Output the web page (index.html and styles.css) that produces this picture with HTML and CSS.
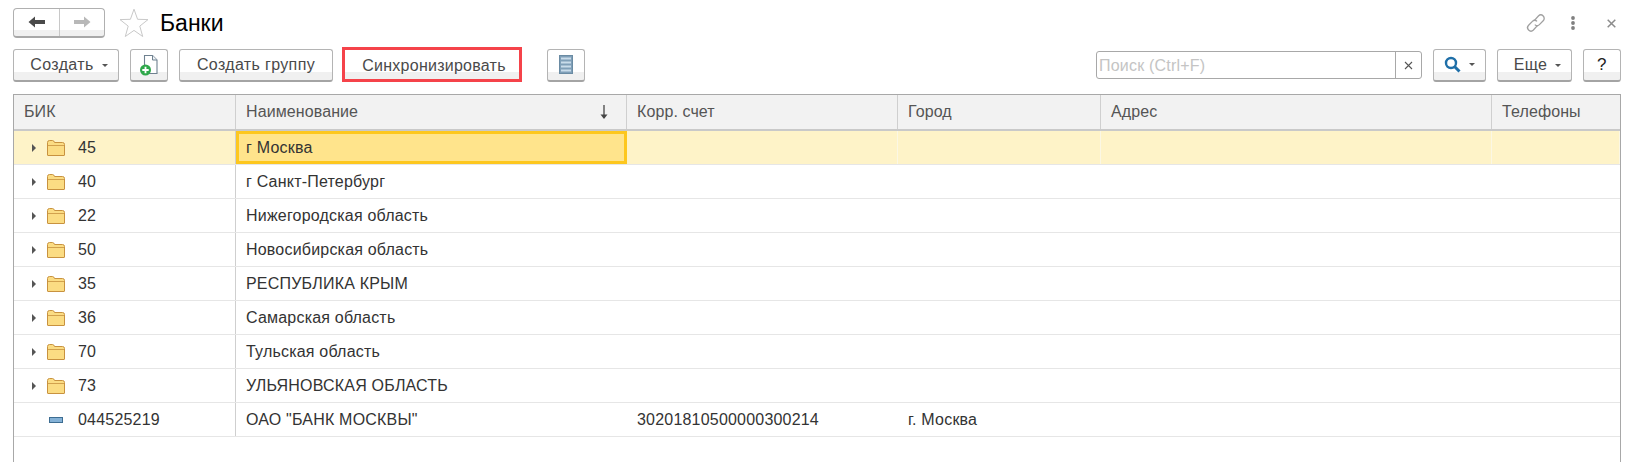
FILE: index.html
```html
<!DOCTYPE html>
<html lang="ru">
<head>
<meta charset="utf-8">
<title>Банки</title>
<link rel="stylesheet" href="styles.css">
</head>
<body>
<div class="page">
  <header class="top">
    <div class="nav">
      <div class="nav-part nav-back"><svg width="18" height="14" viewBox="0 0 18 14"><path d="M0.5 7 7 1.5V5h10v4H7v3.5z" fill="#4a4a4a"/></svg></div>
      <div class="nav-part"><svg width="18" height="14" viewBox="0 0 18 14"><path d="M17.5 7 11 1.5V5H1v4h10v3.5z" fill="#b8b8b8"/></svg></div>
    </div>
    <svg class="star" width="30" height="30" viewBox="0 0 30 30"><path d="M15 1.2 18.6 11.3 29 11.6 20.8 18.1 23.7 28.5 15 22.4 6.3 28.5 9.2 18.1 1 11.6 11.4 11.3z" fill="#fff" stroke="#c9c9c9" stroke-width="1"/></svg>
    <h1 class="title">Банки</h1>
    <div class="win">
      <svg class="w-link" width="20" height="20" viewBox="0 0 20 20" fill="none" stroke="#a0a0a0" stroke-width="1.300"><path d="M8.200 7.600 12.400 3a3.300 3.300 0 0 1 4.800 4.800l-3.800 3.800a3.300 3.300 0 0 1-4.600 0"/><path d="M11.600 12.400 7.400 17a3.300 3.300 0 0 1-4.800-4.800l3.800-3.800a3.300 3.300 0 0 1 4.600 0"/></svg>
      <svg class="w-dots" width="6" height="14" viewBox="0 0 6 14" fill="#808080"><circle cx="3" cy="2" r="1.900"/><circle cx="3" cy="7" r="1.900"/><circle cx="3" cy="12" r="1.900"/></svg>
      <svg class="w-close" width="9" height="9" viewBox="0 0 9 9" stroke="#8c8c8c" stroke-width="1.500"><path d="M.7.7l7.6 7.6M8.300.7.7 8.300"/></svg>
    </div>
  </header>

  <div class="toolbar">
    <div class="btn b-create">Создать<span class="caret"></span></div>
    <div class="btn b-add">
      <svg width="20" height="22" viewBox="0 0 20 22"><path d="M5.500 1.500h8l4.500 4.500v13.500H5.500z" fill="#fff" stroke="#6f8190" stroke-width="1.100"/><path d="M13.500 1.500V6H18" fill="#eef2f5" stroke="#6f8190" stroke-width="1"/><circle cx="6.500" cy="16" r="5.500" fill="#2ea84a"/><path d="M6.500 12.800v6.400M3.300 16h6.400" stroke="#fff" stroke-width="1.800"/></svg>
    </div>
    <div class="btn b-group">Создать группу</div>
    <div class="btn b-sync">Синхронизировать</div>
    <div class="btn b-list">
      <svg width="14" height="19" viewBox="0 0 14 19"><rect x=".5" y=".5" width="13" height="18" fill="#7f9fb8" stroke="#6a8ba3"/><path d="M2 3.500h10M2 7.500h10M2 11.500h10M2 15.500h10" stroke="#c9dcea" stroke-width="2"/></svg>
    </div>
    <div class="search">
      <span class="search-text">Поиск (Ctrl+F)</span>
      <span class="search-clear"><svg width="9" height="9" viewBox="0 0 9 9" stroke="#555" stroke-width="1.100"><path d="M1 1l7 7M8 1 1 8"/></svg></span>
    </div>
    <div class="btn b-find">
      <svg width="17" height="17" viewBox="0 0 17 17" fill="none" stroke="#1f6fa8"><circle cx="7" cy="7" r="5" stroke-width="2.400"/><path d="M10.500 10.500 15.500 15.500" stroke-width="3"/></svg><span class="caret"></span>
    </div>
    <div class="btn b-more">Еще<span class="caret"></span></div>
    <div class="btn b-help">?</div>
  </div>

  <div class="table">
    <div class="row head">
      <div class="cell">БИК</div>
      <div class="cell sort">Наименование<svg width="10" height="15" viewBox="0 0 10 15"><path d="M5 0v13" stroke="#444" stroke-width="1.300"/><path d="M1.500 9.500h7L5 14z" fill="#444"/></svg></div>
      <div class="cell">Корр. счет</div>
      <div class="cell">Город</div>
      <div class="cell">Адрес</div>
      <div class="cell">Телефоны</div>
    </div>

    <div class="row current">
      <div class="cell code"><i class="tw"></i><svg class="folder" width="18" height="16" viewBox="0 0 18 16"><path d="M.5 15V2.500Q.5 .5 2.500 .5h3Q7 .5 7.500 2.500H15.500Q17.500 2.500 17.500 4.500V15Q17.500 15.500 17 15.500H1Q.5 15.500 .5 15z" fill="#fbdc83" stroke="#c8923f"/><path d="M1 5.500h16" stroke="#c8923f" stroke-width=".8"/></svg><span>45</span></div>
      <div class="cell focus">г Москва</div>
      <div class="cell"></div><div class="cell"></div><div class="cell"></div><div class="cell"></div>
    </div>
    <div class="row">
      <div class="cell code"><i class="tw"></i><svg class="folder" width="18" height="16" viewBox="0 0 18 16"><path d="M.5 15V2.500Q.5 .5 2.500 .5h3Q7 .5 7.500 2.500H15.500Q17.500 2.500 17.500 4.500V15Q17.500 15.500 17 15.500H1Q.5 15.500 .5 15z" fill="#fbdc83" stroke="#c8923f"/><path d="M1 5.500h16" stroke="#c8923f" stroke-width=".8"/></svg><span>40</span></div>
      <div class="cell">г Санкт-Петербург</div>
      <div class="cell"></div><div class="cell"></div><div class="cell"></div><div class="cell"></div>
    </div>
    <div class="row">
      <div class="cell code"><i class="tw"></i><svg class="folder" width="18" height="16" viewBox="0 0 18 16"><path d="M.5 15V2.500Q.5 .5 2.500 .5h3Q7 .5 7.500 2.500H15.500Q17.500 2.500 17.500 4.500V15Q17.500 15.500 17 15.500H1Q.5 15.500 .5 15z" fill="#fbdc83" stroke="#c8923f"/><path d="M1 5.500h16" stroke="#c8923f" stroke-width=".8"/></svg><span>22</span></div>
      <div class="cell">Нижегородская область</div>
      <div class="cell"></div><div class="cell"></div><div class="cell"></div><div class="cell"></div>
    </div>
    <div class="row">
      <div class="cell code"><i class="tw"></i><svg class="folder" width="18" height="16" viewBox="0 0 18 16"><path d="M.5 15V2.500Q.5 .5 2.500 .5h3Q7 .5 7.500 2.500H15.500Q17.500 2.500 17.500 4.500V15Q17.500 15.500 17 15.500H1Q.5 15.500 .5 15z" fill="#fbdc83" stroke="#c8923f"/><path d="M1 5.500h16" stroke="#c8923f" stroke-width=".8"/></svg><span>50</span></div>
      <div class="cell">Новосибирская область</div>
      <div class="cell"></div><div class="cell"></div><div class="cell"></div><div class="cell"></div>
    </div>
    <div class="row">
      <div class="cell code"><i class="tw"></i><svg class="folder" width="18" height="16" viewBox="0 0 18 16"><path d="M.5 15V2.500Q.5 .5 2.500 .5h3Q7 .5 7.500 2.500H15.500Q17.500 2.500 17.500 4.500V15Q17.500 15.500 17 15.500H1Q.5 15.500 .5 15z" fill="#fbdc83" stroke="#c8923f"/><path d="M1 5.500h16" stroke="#c8923f" stroke-width=".8"/></svg><span>35</span></div>
      <div class="cell">РЕСПУБЛИКА КРЫМ</div>
      <div class="cell"></div><div class="cell"></div><div class="cell"></div><div class="cell"></div>
    </div>
    <div class="row">
      <div class="cell code"><i class="tw"></i><svg class="folder" width="18" height="16" viewBox="0 0 18 16"><path d="M.5 15V2.500Q.5 .5 2.500 .5h3Q7 .5 7.500 2.500H15.500Q17.500 2.500 17.500 4.500V15Q17.500 15.500 17 15.500H1Q.5 15.500 .5 15z" fill="#fbdc83" stroke="#c8923f"/><path d="M1 5.500h16" stroke="#c8923f" stroke-width=".8"/></svg><span>36</span></div>
      <div class="cell">Самарская область</div>
      <div class="cell"></div><div class="cell"></div><div class="cell"></div><div class="cell"></div>
    </div>
    <div class="row">
      <div class="cell code"><i class="tw"></i><svg class="folder" width="18" height="16" viewBox="0 0 18 16"><path d="M.5 15V2.500Q.5 .5 2.500 .5h3Q7 .5 7.500 2.500H15.500Q17.500 2.500 17.500 4.500V15Q17.500 15.500 17 15.500H1Q.5 15.500 .5 15z" fill="#fbdc83" stroke="#c8923f"/><path d="M1 5.500h16" stroke="#c8923f" stroke-width=".8"/></svg><span>70</span></div>
      <div class="cell">Тульская область</div>
      <div class="cell"></div><div class="cell"></div><div class="cell"></div><div class="cell"></div>
    </div>
    <div class="row">
      <div class="cell code"><i class="tw"></i><svg class="folder" width="18" height="16" viewBox="0 0 18 16"><path d="M.5 15V2.500Q.5 .5 2.500 .5h3Q7 .5 7.500 2.500H15.500Q17.500 2.500 17.500 4.500V15Q17.500 15.500 17 15.500H1Q.5 15.500 .5 15z" fill="#fbdc83" stroke="#c8923f"/><path d="M1 5.500h16" stroke="#c8923f" stroke-width=".8"/></svg><span>73</span></div>
      <div class="cell">УЛЬЯНОВСКАЯ ОБЛАСТЬ</div>
      <div class="cell"></div><div class="cell"></div><div class="cell"></div><div class="cell"></div>
    </div>
    <div class="row">
      <div class="cell code leaf"><i class="dash"></i><span>044525219</span></div>
      <div class="cell">ОАО "БАНК МОСКВЫ"</div>
      <div class="cell">30201810500000300214</div>
      <div class="cell">г. Москва</div>
      <div class="cell"></div><div class="cell"></div>
    </div>
  </div>
</div>
</body>
</html>
```
FILE: styles.css
```css
* { box-sizing: border-box; }
html, body { margin: 0; height: 100%; background: #fff; overflow: hidden; }
body { font-family: "Liberation Sans", Arial, sans-serif; font-size: 16px; letter-spacing: .2px; color: #333; }
.page { height: 462px; display: flex; flex-direction: column; padding: 8px 20px 0 13px; }

.top { display: flex; align-items: center; height: 30px; flex: none; }
.nav {
  width: 92px; height: 30px; display: flex; border: 1px solid #b0b0b0; border-bottom: 2px solid #a8a8a8; border-radius: 4px;
  background: linear-gradient(#fff 0 21px, #f0f0f0 21px);
}
.nav-part { flex: 1; display: flex; align-items: center; justify-content: center; padding-bottom: 2px; }
.nav-back { border-right: 1px solid #c8c8c8; flex: 0 0 46px; }
.star { margin-left: 14px; flex: none; }
.title { margin: 0 0 0 11px; font-size: 23px; font-weight: 400; letter-spacing: 0; color: #000; line-height: 30px; }
.win { margin-left: auto; display: flex; align-items: center; }
.w-link { margin-right: 24px; }
.w-dots { margin-right: 31px; }
.w-close { margin-right: 5px; }

.toolbar { display: flex; align-items: flex-end; height: 35px; margin-top: 9px; flex: none; }
.btn {
  height: 33px; flex: none; display: flex; align-items: center; justify-content: center;
  border: 1px solid #b4b4b4; border-bottom: 2px solid #a4a4a4; border-radius: 3px;
  background: linear-gradient(#fff 0 22px, #f0f0f0 22px);
  color: #4a4a4a; font-size: 16px; letter-spacing: .35px;
}
.caret { width: 0; height: 0; margin-left: 8px; margin-top: 1px; border: 3px solid transparent; border-top: 3px solid #555; border-bottom: 0; }
.b-create { width: 106px; padding-left: 6px; }
.b-add { width: 38px; margin-left: 11px; }
.b-group { width: 154px; margin-left: 11px; }
.b-sync { width: 180px; height: 35px; margin-left: 9px; padding: 2px 0 0 4px; border: 3px solid #f5434a; border-radius: 0; letter-spacing: .25px; }
.b-list { width: 38px; margin-left: 25px; padding-bottom: 2px; }
.search {
  margin-left: auto; margin-bottom: 3px; width: 326px; height: 28px; display: flex; align-items: center;
  border: 1px solid #a8a8a8; border-radius: 3px; background: #fff;
}
.search-text { flex: 1; padding: 1px 0 0 2px; color: #c4c4c4; }
.search-clear { width: 26px; height: 100%; border-left: 1px solid #a8a8a8; display: flex; align-items: center; justify-content: center; }
.b-find { width: 53px; margin-left: 11px; padding-bottom: 2px; }
.b-more { width: 75px; margin-left: 11px; padding-left: 6px; }
.b-help { width: 38px; margin-left: 11px; color: #222; font-size: 17px; }

.table { margin-top: 12px; flex: 1; border: 1px solid #a8a8a8; border-width: 1.500px 1.500px 0; min-height: 0; }
.row {
  display: grid; grid-template-columns: 222px 391px 271px 203px 391px 1fr; height: 34px;
  border-bottom: 1px solid #e6e6e6;
}
.cell { display: flex; align-items: center; padding-left: 10px; min-width: 0; white-space: nowrap; }
.cell:first-child { border-right: 1px solid #cfcfcf; }
.head { height: 36px; background: #f2f2f2; color: #555; letter-spacing: .1px; border-bottom: 2px solid #c9c9c9; }
.head .cell { border-right: 1px solid #cfcfcf; }
.head .cell:last-child { border-right: 0; }
.sort { justify-content: space-between; padding-right: 17px; }

.code { padding-left: 0; }
.tw { width: 0; height: 0; margin-left: 18px; border: 4px solid transparent; border-left: 4px solid #555; border-right: 0; flex: none; }
.folder { margin-left: 11px; flex: none; }
.code span { margin-left: 13px; }
.leaf .dash { width: 14px; height: 6px; margin-left: 35px; background: #84b1d6; border: 1px solid #3d6d92; flex: none; }
.leaf span { margin-left: 15px; }

.current { background: #fef3c8; }
.current .cell + .cell + .cell { border-right: 1px solid #fbf7e4; }
.focus { background: #ffe48c; border: 3px solid #fdc71e; padding-left: 7px; }
```
